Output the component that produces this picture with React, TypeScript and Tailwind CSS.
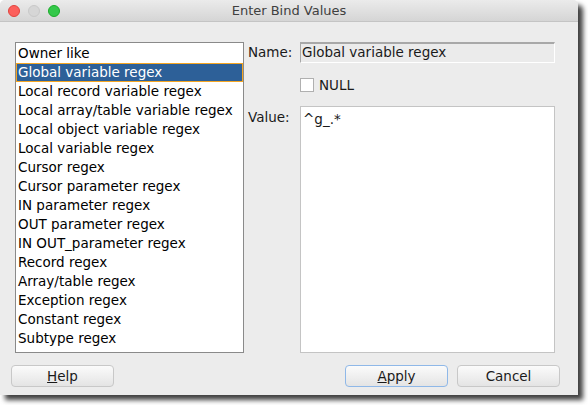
const items = [
  'Owner like',
  'Global variable regex',
  'Local record variable regex',
  'Local array/table variable regex',
  'Local object variable regex',
  'Local variable regex',
  'Cursor regex',
  'Cursor parameter regex',
  'IN parameter regex',
  'OUT parameter regex',
  'IN OUT_parameter regex',
  'Record regex',
  'Array/table regex',
  'Exception regex',
  'Constant regex',
  'Subtype regex',
];

function Button({ children, focused }: { children: React.ReactNode; focused?: boolean }) {
  return (
    <button
      className={
        'h-[22px] w-[103px] rounded-[4px] border bg-gradient-to-b from-[#fbfbfb] to-[#e4e4e4] text-[13.5px] text-[#1a1a1a] ' +
        (focused ? 'border-[#8fb8e8]' : 'border-[#c8c8c8]')
      }
    >
      {children}
    </button>
  );
}

export default function App() {
  return (
    <div className="h-[405px] w-[588px] bg-white font-['DejaVu_Sans',sans-serif]">
      <div className="flex h-[395px] w-[578px] flex-col overflow-hidden rounded-t-[5px] bg-[#ececec] shadow-[5px_5px_5px_rgba(0,0,0,0.75)]">
        <div className="relative flex h-[22px] shrink-0 items-center justify-center border-b border-[#c4c4c4] bg-gradient-to-b from-[#ebebeb] to-[#d5d5d5]">
          <div className="absolute left-[8px] top-[5px] flex gap-[8px]">
            <span className="size-[12px] rounded-full border border-[#e0443e] bg-[#fc605c]" />
            <span className="size-[12px] rounded-full border border-[#c8c8c8] bg-[#d6d6d6]" />
            <span className="size-[12px] rounded-full border border-[#1aab29] bg-[#34c84a]" />
          </div>
          <span className="text-[13px] text-[#404040]">Enter Bind Values</span>
        </div>

        <div className="flex px-[15px] pt-[20px]">
          <div className="h-[311px] w-[229px] shrink-0 border border-[#8a8a8a] bg-white pt-[1px] text-[13.5px] leading-[19px] text-black">
            {items.map((it, i) =>
              i === 1 ? (
                <div key={it} className="h-[19px] border border-[#f5a623] bg-[#2d6098] pl-[1px] leading-[17px] text-white">
                  {it}
                </div>
              ) : (
                <div key={it} className="h-[19px] pl-[2px]">
                  {it}
                </div>
              ),
            )}
          </div>

          <div className="ml-[4px] flex flex-1 flex-col text-[13.5px] text-[#1a1a1a]">
            <div className="flex items-center">
              <span className="w-[52px]">Name:</span>
              <div className="h-[21px] w-[255px] border border-t-2 border-[#a8a8a8] border-b-white border-r-white bg-[#ebebeb] pl-[1px] leading-[17px]">
                Global variable regex
              </div>
            </div>
            <div className="mt-[12px] flex items-center pl-[52px]">
              <span className="size-[14px] border border-[#b0b0b0] bg-white" />
              <span className="ml-[5px]">NULL</span>
            </div>
            <div className="mt-[11px] flex">
              <span className="w-[52px] pt-[1px]">Value:</span>
              <div className="h-[247px] w-[255px] border border-[#c4c4c4] bg-white px-[2px] pt-[2px]">^g_.*</div>
            </div>
          </div>
        </div>

        <div className="flex items-center px-[11px] pt-[12px]">
          <Button>
            <span className="underline">H</span>elp
          </Button>
          <div className="flex-1" />
          <Button focused>
            <span className="underline">A</span>pply
          </Button>
          <div className="w-[9px]" />
          <Button>Cancel</Button>
          <div className="w-[7px]" />
        </div>
      </div>
    </div>
  );
}
